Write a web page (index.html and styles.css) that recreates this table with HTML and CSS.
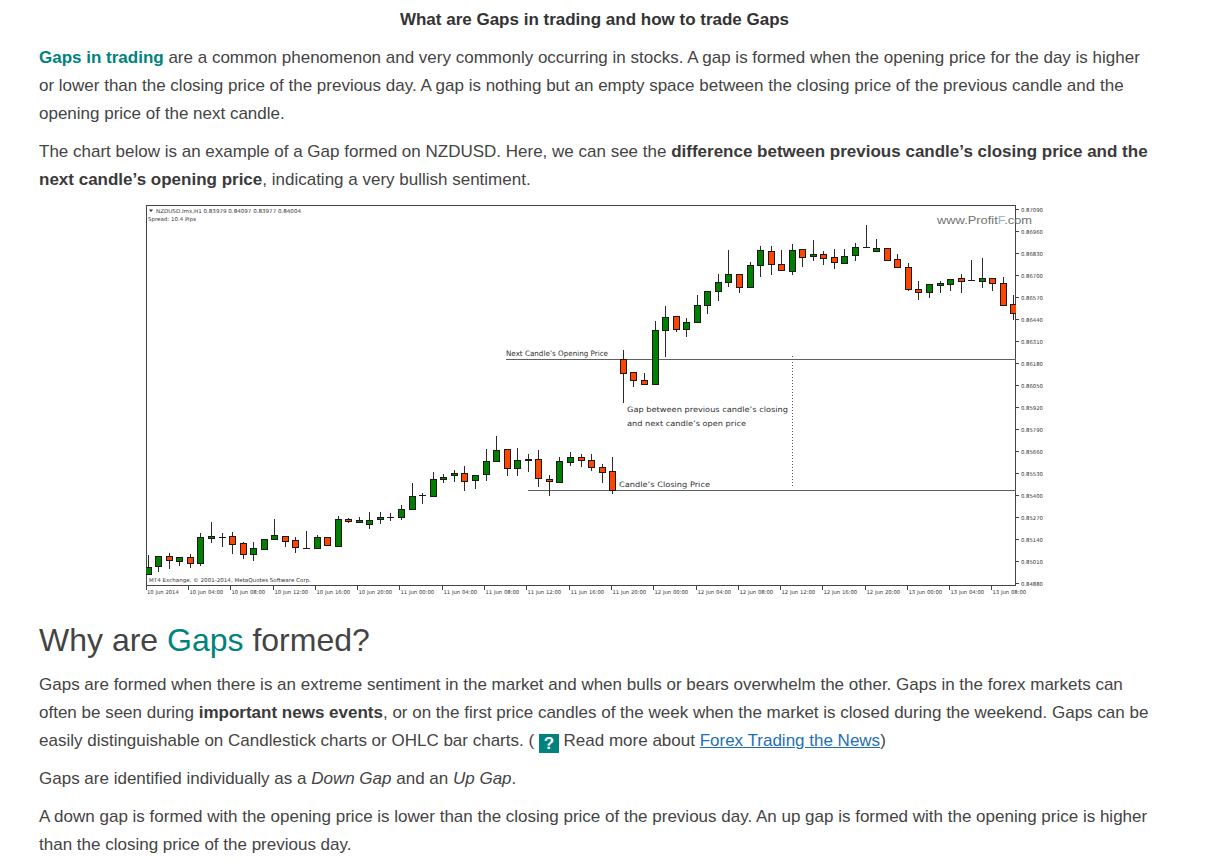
FILE: index.html
```html
<!DOCTYPE html>
<html lang="en">
<head>
<meta charset="utf-8">
<title>What are Gaps in trading and how to trade Gaps</title>
<link rel="stylesheet" href="styles.css">
</head>
<body>
<div class="article">
  <p class="title">What are Gaps in trading and how to trade Gaps</p>
  <p><strong class="teal">Gaps in trading</strong> are a common phenomenon and very commonly occurring in stocks. A gap is formed when the opening price for the day is higher or lower than the closing price of the previous day. A gap is nothing but an empty space between the closing price of the previous candle and the opening price of the next candle.</p>
  <p class="before-chart">The chart below is an example of a Gap formed on NZDUSD. Here, we can see the <strong>difference between previous candle’s closing price and the next candle’s opening price</strong>, indicating a very bullish sentiment.</p>

  <svg class="chart" viewBox="142 203 904 396" width="904" height="396" xmlns="http://www.w3.org/2000/svg">
    <defs>
      <clipPath id="plot"><rect x="145" y="205" width="870" height="380"/></clipPath>
    </defs>
    <rect class="frame" x="145.5" y="205.5" width="869" height="380"/>

    <g class="small">
      <polygon points="148,209.5 152,209.5 150,212" class="tri"/>
      <text x="155" y="212.5" textLength="145" lengthAdjust="spacingAndGlyphs">NZDUSD.lmx,H1  0.83979 0.84097 0.83977 0.84004</text>
      <text x="147" y="220.5" textLength="48" lengthAdjust="spacingAndGlyphs">Spread: 10.4 Pips</text>
      <text x="148" y="582" textLength="162" lengthAdjust="spacingAndGlyphs">MT4 Exchange, © 2001-2014, MetaQuotes Software Corp.</text>
    </g>

    <text class="wm" x="936" y="224" textLength="95" lengthAdjust="spacingAndGlyphs">www.Profit<tspan class="wmf">F</tspan>.com</text>

    <g class="ann">
      <line x1="505" y1="359.5" x2="1015" y2="359.5"/>
      <line x1="527" y1="490.5" x2="1015" y2="490.5"/>
      <line class="dot" x1="791.5" y1="356" x2="791.5" y2="486"/>
    </g>
    <g class="anntext">
      <text x="505" y="355.5" textLength="102" lengthAdjust="spacingAndGlyphs">Next Candle’s Opening Price</text>
      <text x="626" y="411.5" textLength="161" lengthAdjust="spacingAndGlyphs">Gap between previous candle’s closing</text>
      <text x="626" y="425.5" textLength="119" lengthAdjust="spacingAndGlyphs">and next candle’s open price</text>
      <text x="618" y="487" textLength="91" lengthAdjust="spacingAndGlyphs">Candle’s Closing Price</text>
    </g>

    <g clip-path="url(#plot)">
      <path class="wick" d="M147.5 555V574 M157.5 556V572 M168.5 553V569 M178.5 557V566 M189.5 554V568 M199.5 533V566 M210.5 522V543 M221.5 533V547 M231.5 532V554 M242.5 542V559 M252.5 542V561 M263.5 539V549 M273.5 519V540 M284.5 536V547 M294.5 537V553 M305.5 531V548 M316.5 535V548 M326.5 537V545 M337.5 516V547 M347.5 518V523 M358.5 517V523 M368.5 512V529 M379.5 512V524 M389.5 513V521 M400.5 505V520 M411.5 483V509 M421.5 493V504 M432.5 472V496 M442.5 474V483 M453.5 470V482 M463.5 466V491 M474.5 475V489 M485.5 449V481 M495.5 436V462 M506.5 449V476 M516.5 448V476 M527.5 454V472 M537.5 450V487 M548.5 475V496 M558.5 457V482 M569.5 452V466 M580.5 454V467 M590.5 454V471 M601.5 464V483 M611.5 457V494 M622.5 350V403 M632.5 372V387 M643.5 373V384 M654.5 321V384 M664.5 306V357 M675.5 316V332 M685.5 318V337 M696.5 295V322 M706.5 291V314 M717.5 274V301 M727.5 250V287 M738.5 274V293 M749.5 262V287 M759.5 246V277 M770.5 246V275 M780.5 250V270 M791.5 244V275 M801.5 249V267 M812.5 240V261 M822.5 251V265 M833.5 249V269 M843.5 249V263 M854.5 243V261 M865.5 225V247 M875.5 239V252 M886.5 248V260 M896.5 254V268 M907.5 263V291 M917.5 281V300 M928.5 284V298 M939.5 281V293 M949.5 279V291 M960.5 274V293 M970.5 260V281 M981.5 258V288 M991.5 278V291 M1002.5 277V305 M1012.5 295V320"/>
      <rect class="u" x="144.5" y="567.5" width="6" height="7"/>
      <rect class="u" x="154.5" y="556.5" width="6" height="10"/>
      <rect class="d" x="165.5" y="556.5" width="6" height="4"/>
      <rect class="u" x="175.5" y="557.5" width="6" height="4"/>
      <rect class="d" x="186.5" y="557.5" width="6" height="6"/>
      <rect class="u" x="196.5" y="537.5" width="6" height="26"/>
      <rect class="u" x="207.5" y="536.5" width="6" height="2"/>
      <rect class="j" x="218" y="537" width="7" height="1"/>
      <rect class="d" x="228.5" y="536.5" width="6" height="8"/>
      <rect class="d" x="239.5" y="543.5" width="6" height="11"/>
      <rect class="u" x="249.5" y="548.5" width="6" height="6"/>
      <rect class="u" x="260.5" y="539.5" width="6" height="10"/>
      <rect class="u" x="270.5" y="535.5" width="6" height="4"/>
      <rect class="d" x="281.5" y="536.5" width="6" height="5"/>
      <rect class="d" x="291.5" y="540.5" width="6" height="7"/>
      <rect class="j" x="302" y="548" width="7" height="1"/>
      <rect class="u" x="313.5" y="537.5" width="6" height="11"/>
      <rect class="d" x="323.5" y="537.5" width="6" height="8"/>
      <rect class="u" x="334.5" y="519.5" width="6" height="27"/>
      <rect class="d" x="344.5" y="519.5" width="6" height="2"/>
      <rect class="u" x="355.5" y="520.5" width="6" height="2"/>
      <rect class="u" x="365.5" y="520.5" width="6" height="4"/>
      <rect class="u" x="376.5" y="517.5" width="6" height="2"/>
      <rect class="j" x="386" y="517" width="7" height="1"/>
      <rect class="u" x="397.5" y="509.5" width="6" height="8"/>
      <rect class="u" x="408.5" y="496.5" width="6" height="13"/>
      <rect class="j" x="418" y="495" width="7" height="1"/>
      <rect class="u" x="429.5" y="479.5" width="6" height="17"/>
      <rect class="u" x="439.5" y="477.5" width="6" height="2"/>
      <rect class="u" x="450.5" y="473.5" width="6" height="2"/>
      <rect class="d" x="460.5" y="473.5" width="6" height="8"/>
      <rect class="u" x="471.5" y="475.5" width="6" height="5"/>
      <rect class="u" x="482.5" y="461.5" width="6" height="13"/>
      <rect class="u" x="492.5" y="450.5" width="6" height="11"/>
      <rect class="d" x="503.5" y="449.5" width="6" height="19"/>
      <rect class="u" x="513.5" y="460.5" width="6" height="8"/>
      <rect class="u" x="524.5" y="459.5" width="6" height="1"/>
      <rect class="d" x="534.5" y="459.5" width="6" height="19"/>
      <rect class="d" x="545.5" y="479.5" width="6" height="2"/>
      <rect class="u" x="555.5" y="461.5" width="6" height="21"/>
      <rect class="u" x="566.5" y="457.5" width="6" height="5"/>
      <rect class="d" x="577.5" y="457.5" width="6" height="3"/>
      <rect class="d" x="587.5" y="460.5" width="6" height="7"/>
      <rect class="d" x="598.5" y="467.5" width="6" height="5"/>
      <rect class="d" x="608.5" y="471.5" width="6" height="19"/>
      <rect class="d" x="619.5" y="359.5" width="6" height="14"/>
      <rect class="d" x="629.5" y="372.5" width="6" height="8"/>
      <rect class="d" x="640.5" y="380.5" width="6" height="4"/>
      <rect class="u" x="651.5" y="330.5" width="6" height="54"/>
      <rect class="u" x="661.5" y="317.5" width="6" height="13"/>
      <rect class="d" x="672.5" y="316.5" width="6" height="13"/>
      <rect class="u" x="682.5" y="322.5" width="6" height="7"/>
      <rect class="u" x="693.5" y="305.5" width="6" height="17"/>
      <rect class="u" x="703.5" y="291.5" width="6" height="14"/>
      <rect class="u" x="714.5" y="282.5" width="6" height="9"/>
      <rect class="u" x="724.5" y="274.5" width="6" height="8"/>
      <rect class="d" x="735.5" y="274.5" width="6" height="13"/>
      <rect class="u" x="746.5" y="265.5" width="6" height="22"/>
      <rect class="u" x="756.5" y="250.5" width="6" height="15"/>
      <rect class="d" x="767.5" y="251.5" width="6" height="13"/>
      <rect class="d" x="777.5" y="264.5" width="6" height="6"/>
      <rect class="u" x="788.5" y="250.5" width="6" height="21"/>
      <rect class="d" x="798.5" y="249.5" width="6" height="8"/>
      <rect class="u" x="809.5" y="254.5" width="6" height="2"/>
      <rect class="d" x="819.5" y="254.5" width="6" height="4"/>
      <rect class="d" x="830.5" y="257.5" width="6" height="5"/>
      <rect class="u" x="840.5" y="256.5" width="6" height="7"/>
      <rect class="u" x="851.5" y="247.5" width="6" height="8"/>
      <rect class="j" x="862" y="247" width="7" height="1"/>
      <rect class="u" x="872.5" y="248.5" width="6" height="3"/>
      <rect class="d" x="883.5" y="248.5" width="6" height="12"/>
      <rect class="d" x="893.5" y="259.5" width="6" height="8"/>
      <rect class="d" x="904.5" y="267.5" width="6" height="22"/>
      <rect class="d" x="914.5" y="289.5" width="6" height="3"/>
      <rect class="u" x="925.5" y="284.5" width="6" height="8"/>
      <rect class="u" x="936.5" y="283.5" width="6" height="2"/>
      <rect class="u" x="946.5" y="279.5" width="6" height="5"/>
      <rect class="d" x="957.5" y="278.5" width="6" height="3"/>
      <rect class="j" x="967" y="280" width="7" height="1"/>
      <rect class="u" x="978.5" y="278.5" width="6" height="3"/>
      <rect class="d" x="988.5" y="278.5" width="6" height="5"/>
      <rect class="d" x="999.5" y="283.5" width="6" height="22"/>
      <rect class="d" x="1009.5" y="304.5" width="6" height="9"/>
    </g>

    <path class="tick" d="M1015 209.5H1018 M1015 231.5H1018 M1015 253.5H1018 M1015 275.5H1018 M1015 297.5H1018 M1015 319.5H1018 M1015 341.5H1018 M1015 363.5H1018 M1015 385.5H1018 M1015 407.5H1018 M1015 429.5H1018 M1015 451.5H1018 M1015 473.5H1018 M1015 495.5H1018 M1015 517.5H1018 M1015 539.5H1018 M1015 561.5H1018 M1015 583.5H1018"/>
    <g class="axis">
      <text x="1020" y="211.5">0.87090</text>
      <text x="1020" y="233.5">0.86960</text>
      <text x="1020" y="255.5">0.86830</text>
      <text x="1020" y="277.5">0.86700</text>
      <text x="1020" y="299.5">0.86570</text>
      <text x="1020" y="321.5">0.86440</text>
      <text x="1020" y="343.5">0.86310</text>
      <text x="1020" y="365.5">0.86180</text>
      <text x="1020" y="387.5">0.86050</text>
      <text x="1020" y="409.5">0.85920</text>
      <text x="1020" y="431.5">0.85790</text>
      <text x="1020" y="453.5">0.85660</text>
      <text x="1020" y="475.5">0.85530</text>
      <text x="1020" y="497.5">0.85400</text>
      <text x="1020" y="519.5">0.85270</text>
      <text x="1020" y="541.5">0.85140</text>
      <text x="1020" y="563.5">0.85010</text>
      <text x="1020" y="585.5">0.84880</text>
    </g>

    <path class="tick" d="M145.5 585V590 M187.5 585V590 M229.5 585V590 M272.5 585V590 M314.5 585V590 M356.5 585V590 M398.5 585V590 M441.5 585V590 M483.5 585V590 M525.5 585V590 M568.5 585V590 M610.5 585V590 M652.5 585V590 M695.5 585V590 M737.5 585V590 M779.5 585V590 M821.5 585V590 M864.5 585V590 M906.5 585V590 M948.5 585V590 M990.5 585V590"/>
    <g class="axis">
      <text x="146" y="594">10 Jun 2014</text>
      <text x="188.5" y="594">10 Jun 04:00</text>
      <text x="230.5" y="594">10 Jun 08:00</text>
      <text x="273.5" y="594">10 Jun 12:00</text>
      <text x="315.5" y="594">10 Jun 16:00</text>
      <text x="357.5" y="594">10 Jun 20:00</text>
      <text x="399.5" y="594">11 Jun 00:00</text>
      <text x="442.5" y="594">11 Jun 04:00</text>
      <text x="484.5" y="594">11 Jun 08:00</text>
      <text x="526.5" y="594">11 Jun 12:00</text>
      <text x="569.5" y="594">11 Jun 16:00</text>
      <text x="611.5" y="594">11 Jun 20:00</text>
      <text x="653.5" y="594">12 Jun 00:00</text>
      <text x="696.5" y="594">12 Jun 04:00</text>
      <text x="738.5" y="594">12 Jun 08:00</text>
      <text x="780.5" y="594">12 Jun 12:00</text>
      <text x="822.5" y="594">12 Jun 16:00</text>
      <text x="865.5" y="594">12 Jun 20:00</text>
      <text x="907.5" y="594">13 Jun 00:00</text>
      <text x="949.5" y="594">13 Jun 04:00</text>
      <text x="991.5" y="594">13 Jun 08:00</text>
    </g>
  </svg>

  <h2>Why are <span class="teal">Gaps</span> formed?</h2>
  <p>Gaps are formed when there is an extreme sentiment in the market and when bulls or bears overwhelm the other. Gaps in the forex markets can often be seen during <strong>important news events</strong>, or on the first price candles of the week when the market is closed during the weekend. Gaps can be easily distinguishable on Candlestick charts or OHLC bar charts. ( <span class="qicon">?</span> Read more about <a href="#">Forex Trading the News</a>)</p>
  <p>Gaps are identified individually as a <em>Down Gap</em> and an <em>Up Gap</em>.</p>
  <p>A down gap is formed with the opening price is lower than the closing price of the previous day. An up gap is formed with the opening price is higher than the closing price of the previous day.</p>
</div>
</body>
</html>
```

FILE: styles.css
```css
html, body {
  margin: 0;
  padding: 0;
  background: #ffffff;
}

body {
  font-family: "Liberation Sans", Arial, sans-serif;
  font-size: 17px;
  line-height: 28px;
  color: #444444;
}

.article {
  width: 1111px;
  padding: 6px 0 0 39px;
}

.article p {
  margin: 0 0 10px;
}

.article p.before-chart {
  margin-bottom: 9px;
}

.article .title {
  text-align: center;
  font-weight: bold;
  color: #333333;
  margin: 0 0 10px;
}

strong {
  font-weight: bold;
  color: #3a3a3a;
}

.teal,
strong.teal {
  color: #00827e;
}

.chart {
  display: block;
  margin: 0 auto;
  width: 904px;
  height: 396px;
}

h2 {
  font-size: 32px;
  line-height: 38px;
  font-weight: normal;
  color: #444444;
  margin: 22px 0 12px;
}

.qicon {
  display: inline-block;
  width: 20px;
  height: 19px;
  line-height: 19px;
  background: #00827e;
  color: #ffffff;
  font-weight: bold;
  text-align: center;
  vertical-align: -3px;
}

a {
  color: #1e6fb5;
  text-decoration: underline;
}

/* chart */
.frame {
  fill: #ffffff;
  stroke: #444444;
  stroke-width: 1;
}

.small text,
.axis text {
  font-family: "DejaVu Sans", "Liberation Sans", sans-serif;
  font-size: 5.3px;
  fill: #333333;
}

.tri {
  fill: #333333;
}

.wm {
  font-family: "Liberation Sans", Arial, sans-serif;
  font-size: 11.5px;
  fill: #727272;
}

.wmf {
  fill: #93b4bf;
}

.ann line {
  stroke: #606060;
  stroke-width: 1;
}

.ann line.dot {
  stroke: #555555;
  stroke-dasharray: 1 2;
}

.anntext text {
  font-family: "DejaVu Sans", "Liberation Sans", sans-serif;
  font-size: 7.4px;
  fill: #2f2f2f;
}

.wick {
  stroke: #2a2a2a;
  stroke-width: 1;
  fill: none;
}

.u {
  fill: #008000;
  stroke: #1a1a1a;
  stroke-width: 1;
}

.d {
  fill: #ff4500;
  stroke: #1a1a1a;
  stroke-width: 1;
}

.j {
  fill: #1a1a1a;
}

.tick {
  stroke: #444444;
  stroke-width: 1;
  fill: none;
}
```
